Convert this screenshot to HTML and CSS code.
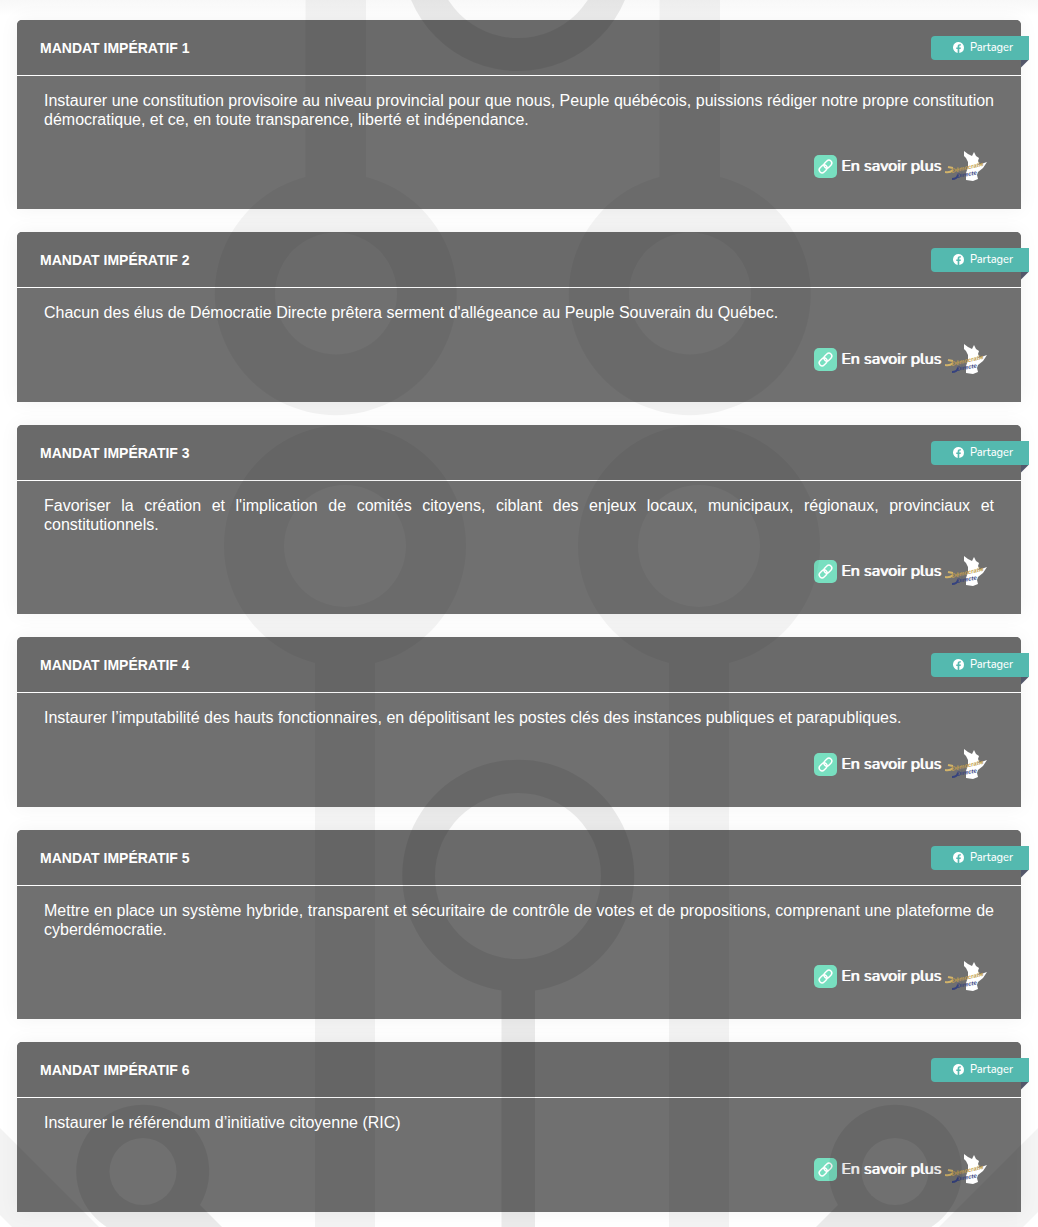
FILE: index.html
```html
<!DOCTYPE html>
<html lang="fr">
<head>
<meta charset="utf-8">
<meta name="viewport" content="width=device-width, initial-scale=1">
<title>Mandats impératifs</title>
<link rel="stylesheet" href="styles.css">
</head>
<body>
<svg class="defs" aria-hidden="true">
  <symbol id="i-facebook" viewBox="0 0 24 24">
    <path fill="currentColor" d="M24 12a12 12 0 1 0-13.900 11.900v-8.400h-3V12h3V9.400c0-3 1.800-4.700 4.500-4.700 1.300 0 2.700.2 2.700.2v3h-1.500c-1.500 0-2 .9-2 1.900V12h3.400l-.5 3.500h-2.900v8.400A12 12 0 0 0 24 12z"/>
  </symbol>
  <symbol id="i-link" viewBox="0 0 24 24">
    <g fill="none" stroke="#fff" stroke-width="1.500" transform="rotate(-45 12 12)">
      <rect x="4" y="9" width="9" height="6" rx="3"/>
      <rect x="11" y="9" width="9" height="6" rx="3"/>
    </g>
  </symbol>
  <symbol id="i-logo" viewBox="0 0 44 30">
    <path fill="#fff" d="M19 0l4 3 4 2 2-4 2 4 3 2-1 3 1 2-1 2 9-3-4 6-5 4-1 3 1 4-5 2-7-1 0-7 2-6 0-5-2-4-2-2z"/>
    <path fill="none" stroke="#d2b36a" stroke-width="2" d="M0 21q5 1 8-2M3 16l5 1"/>
    <path fill="none" stroke="#35427f" stroke-width="2" d="M7 28q5 0 6-4"/>
    <g font-family="Liberation Sans, sans-serif" font-style="italic" font-weight="700" font-size="6">
      <text x="7" y="22" fill="#c39f4e" transform="rotate(-13 7 22)">Démocratie</text>
      <text x="12" y="27" fill="#35427f" transform="rotate(-10 12 27)">Directe</text>
    </g>
  </symbol>
</svg>

<main class="mandates">
  <article class="card">
    <header class="card-head"><h2>MANDAT IMPÉRATIF 1</h2><button class="share" type="button"><svg><use href="#i-facebook"/></svg>Partager</button></header>
    <div class="card-body">
      <p>Instaurer une constitution provisoire au niveau provincial pour que nous, Peuple québécois, puissions rédiger notre propre constitution démocratique, et ce, en toute transparence, liberté et indépendance.</p>
      <a class="more" href="#"><svg class="link"><use href="#i-link"/></svg>En savoir plus<svg class="logo"><use href="#i-logo"/></svg></a>
    </div>
  </article>
  <article class="card">
    <header class="card-head"><h2>MANDAT IMPÉRATIF 2</h2><button class="share" type="button"><svg><use href="#i-facebook"/></svg>Partager</button></header>
    <div class="card-body">
      <p>Chacun des élus de Démocratie Directe prêtera serment d'allégeance au Peuple Souverain du Québec.</p>
      <a class="more" href="#"><svg class="link"><use href="#i-link"/></svg>En savoir plus<svg class="logo"><use href="#i-logo"/></svg></a>
    </div>
  </article>
  <article class="card">
    <header class="card-head"><h2>MANDAT IMPÉRATIF 3</h2><button class="share" type="button"><svg><use href="#i-facebook"/></svg>Partager</button></header>
    <div class="card-body">
      <p>Favoriser la création et l'implication de comités citoyens, ciblant des enjeux locaux, municipaux, régionaux, provinciaux et constitutionnels.</p>
      <a class="more" href="#"><svg class="link"><use href="#i-link"/></svg>En savoir plus<svg class="logo"><use href="#i-logo"/></svg></a>
    </div>
  </article>
  <article class="card">
    <header class="card-head"><h2>MANDAT IMPÉRATIF 4</h2><button class="share" type="button"><svg><use href="#i-facebook"/></svg>Partager</button></header>
    <div class="card-body">
      <p>Instaurer l’imputabilité des hauts fonctionnaires, en dépolitisant les postes clés des instances publiques et parapubliques.</p>
      <a class="more" href="#"><svg class="link"><use href="#i-link"/></svg>En savoir plus<svg class="logo"><use href="#i-logo"/></svg></a>
    </div>
  </article>
  <article class="card">
    <header class="card-head"><h2>MANDAT IMPÉRATIF 5</h2><button class="share" type="button"><svg><use href="#i-facebook"/></svg>Partager</button></header>
    <div class="card-body">
      <p>Mettre en place un système hybride, transparent et sécuritaire de contrôle de votes et de propositions, comprenant une plateforme de cyberdémocratie.</p>
      <a class="more" href="#"><svg class="link"><use href="#i-link"/></svg>En savoir plus<svg class="logo"><use href="#i-logo"/></svg></a>
    </div>
  </article>
  <article class="card">
    <header class="card-head"><h2>MANDAT IMPÉRATIF 6</h2><button class="share" type="button"><svg><use href="#i-facebook"/></svg>Partager</button></header>
    <div class="card-body">
      <p>Instaurer le référendum d’initiative citoyenne (RIC)</p>
      <a class="more" href="#"><svg class="link"><use href="#i-link"/></svg>En savoir plus<svg class="logo"><use href="#i-logo"/></svg></a>
    </div>
  </article>
</main>

<svg class="pattern" viewBox="0 0 1038 1227" preserveAspectRatio="xMidYMin slice" aria-hidden="true">
  <defs>
    <mask id="ring-holes" maskUnits="userSpaceOnUse" x="0" y="0" width="1038" height="1227">
      <rect width="1038" height="1227" fill="#fff"/>
      <circle cx="143" cy="1171.500" r="33.500"/><circle cx="895" cy="1171.500" r="33.500"/>
    </mask>
  </defs>
  <g class="soft">
    <path d="M305.500 0h60.500v177a121 121 0 1 1-60.500 0zM336 232.500a61 61 0 1 0 0 122a61 61 0 1 0 0-122z"/>
    <path d="M659.500 0h60.500v177a121 121 0 1 1-60.500 0zM690 232.500a61 61 0 1 0 0 122a61 61 0 1 0 0-122z"/>
    <path d="M315 1227V663a121 121 0 1 1 60 0v564zM345 485a61 61 0 1 0 0 122a61 61 0 1 0 0-122z"/>
    <path d="M669 1227V663a121 121 0 1 1 60 0v564zM699 485a61 61 0 1 0 0 122a61 61 0 1 0 0-122z"/>
    <path d="M0 1128l99 99H12l-12-12zM1038 1128l-99 99h84l15-15z"/>
  </g>
  <g class="strong">
    <path d="M402 -45a116 116 0 1 0 232 0a116 116 0 1 0-232 0zM435 -45a83 83 0 1 0 166 0a83 83 0 1 0-166 0z"/>
    <path d="M501.500 1227V990.500a116 116 0 1 1 33.500 0V1227zM435 876a83 83 0 1 0 166 0a83 83 0 1 0-166 0z"/>
    <g mask="url(#ring-holes)">
      <path d="M200 1205l22 22H106.500A66.500 66.500 0 1 1 200 1205z"/>
      <path d="M838 1205l-22 22H931.500A66.500 66.500 0 1 0 838 1205z"/>
    </g>
  </g>
</svg>
</body>
</html>
```
FILE: styles.css
```css
* { box-sizing: border-box; }

body {
  position: relative;
  min-height: 100vh;
  margin: 0;
  background: linear-gradient(#f8f8f8, #fff 16px);
  color: #fff;
  font-family: Arial, "Liberation Sans", sans-serif;
}

.defs { display: none; }

.mandates {
  display: flex;
  flex-direction: column;
  gap: 23px;
  padding: 20px 17px 15px;
}

.card {
  border-radius: 5px 5px 0 0;
  background: #707070;
  box-shadow: 0 0 20px rgba(0, 0, 0, 0.05);
}

.card-head {
  display: flex;
  align-items: center;
  justify-content: space-between;
  height: 56px;
  padding-left: 23px;
  border-bottom: 1px solid #fff;
  border-radius: 5px 5px 0 0;
  background: #6a6a6a;
}

.card-head h2 { margin: 0; font-size: 14px; line-height: 20px; }

.share {
  position: relative;
  display: flex;
  align-items: center;
  gap: 6px;
  height: 24px;
  margin-right: -8px;
  padding: 0 16px 0 22px;
  border: 0;
  border-radius: 4px 0 0 4px;
  background: #54b9af;
  color: #fff;
  font: 500 11px/24px Nunito, Lato, sans-serif;
}

.share svg { width: 11px; height: 11px; }

/* folded corner of the ribbon */
.share::after {
  content: "";
  position: absolute;
  top: 100%;
  right: 0;
  width: 8px;
  height: 8px;
  background: #54576a;
  clip-path: polygon(0 0, 100% 0, 0 100%);
}

.card-body {
  display: flex;
  flex-direction: column;
  gap: 22px;
  padding: 15px 27px 28px;
}

/* keeps the copy fully white above the tinted pattern */
.card-body p {
  position: relative;
  z-index: 1;
  margin: 0;
  font-size: 16px;
  line-height: 19px;
  text-align: justify;
}

.more {
  display: flex;
  align-items: center;
  align-self: flex-end;
  gap: 4px;
  height: 30px;
  padding-right: 5px;
  color: #fff;
  font: 400 16px/30px Nunito, Lato, sans-serif;
  text-decoration: none;
  text-shadow: 1px 0 #fff;
}

.link { width: 23px; height: 23px; border-radius: 5px; background: #78dfc0; }
.logo { width: 44px; height: 30px; text-shadow: none; }

.pattern {
  position: absolute;
  inset: 0;
  width: 100%;
  height: 100%;
  pointer-events: none;
}

.pattern path { fill-rule: evenodd; }
.soft { opacity: 0.045; }
.strong { opacity: 0.075; }
```
